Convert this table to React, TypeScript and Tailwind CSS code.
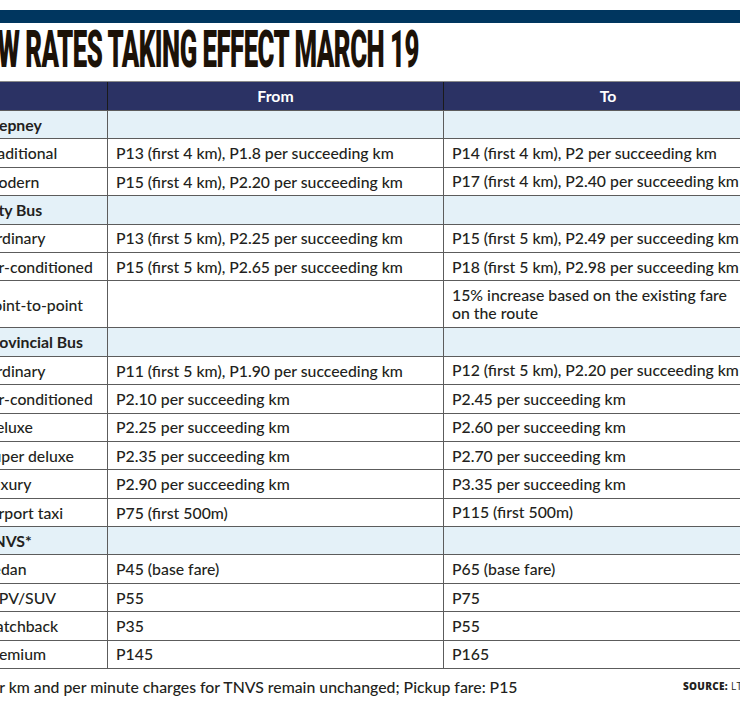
import React from "react";

type Row = {
  label: string;
  from?: string;
  to?: string;
  group?: boolean;
  tall?: boolean;
};

const rows: Row[] = [
  { label: "Jeepney", group: true },
  { label: "Traditional", from: "P13 (first 4 km), P1.8 per succeeding km", to: "P14 (first 4 km), P2 per succeeding km" },
  { label: "Modern", from: "P15 (first 4 km), P2.20 per succeeding km", to: "P17 (first 4 km), P2.40 per succeeding km" },
  { label: "City Bus", group: true },
  { label: "Ordinary", from: "P13 (first 5 km), P2.25 per succeeding km", to: "P15 (first 5 km), P2.49 per succeeding km" },
  { label: "Air-conditioned", from: "P15 (first 5 km), P2.65 per succeeding km", to: "P18 (first 5 km), P2.98 per succeeding km" },
  { label: "Point-to-point", from: "", to: "15% increase based on the existing fare on the route", tall: true },
  { label: "Provincial Bus", group: true },
  { label: "Ordinary", from: "P11 (first 5 km), P1.90 per succeeding km", to: "P12 (first 5 km), P2.20 per succeeding km" },
  { label: "Air-conditioned", from: "P2.10 per succeeding km", to: "P2.45 per succeeding km" },
  { label: "Deluxe", from: "P2.25 per succeeding km", to: "P2.60 per succeeding km" },
  { label: "Super deluxe", from: "P2.35 per succeeding km", to: "P2.70 per succeeding km" },
  { label: "Luxury", from: "P2.90 per succeeding km", to: "P3.35 per succeeding km" },
  { label: "Airport taxi", from: "P75 (first 500m)", to: "P115 (first 500m)" },
  { label: "TNVS*", group: true },
  { label: "Sedan", from: "P45 (base fare)", to: "P65 (base fare)" },
  { label: "MPV/SUV", from: "P55", to: "P75" },
  { label: "Hatchback", from: "P35", to: "P55" },
  { label: "Premium", from: "P145", to: "P165" },
];

function FareRow({ row }: { row: Row }) {
  const bg = row.group ? "bg-[#e4f1f8]" : "bg-white";
  const h = row.tall ? "h-[47px]" : "h-[28.4px]";
  return (
    <div className={`grid grid-cols-[132px_336px_336px] border-b border-[#5c5c5c] ${bg} ${h}`}>
      <div className={`flex items-center border-r border-[#5c5c5c] px-2 whitespace-nowrap ${row.group ? "font-bold" : ""}`}>
        {row.label}
      </div>
      <div className="flex items-center border-r border-[#5c5c5c] px-2 whitespace-nowrap">{row.from}</div>
      <div className="flex items-center px-2 leading-[18px] whitespace-nowrap">
        {row.tall ? (
          <span className="w-[284px] whitespace-normal">{row.to}</span>
        ) : (
          row.to
        )}
      </div>
    </div>
  );
}

export default function App() {
  return (
    <div className="h-[710px] w-[740px] overflow-hidden bg-white font-['Lato',sans-serif] text-[15.8px] font-medium text-[#231f20]">
      {/* top rule */}
      <div className="pt-[10px]">
        <div className="h-[13px] bg-[#00365f]" />
      </div>

      {/* title */}
      <div className="h-[58px] whitespace-nowrap">
        <h1 className="-ml-[34px] origin-left scale-x-[0.495] font-['Roboto',sans-serif] text-[52px] font-black leading-[54px] tracking-[-1px] text-[#1c1208]">
          NEW RATES TAKING EFFECT MARCH 19
        </h1>
      </div>

      {/* table */}
      <div className="-ml-[24px] w-[804px] border-t border-[#8a8a8a]">
        <div className="grid h-[29px] grid-cols-[132px_336px_328px] border-b border-[#5c5c5c] bg-[#2b3264] font-bold text-white">
          <div className="border-r border-[#1a1a1a]" />
          <div className="flex items-center justify-center border-r border-[#1a1a1a]">From</div>
          <div className="flex items-center justify-center">To</div>
        </div>
        {rows.map((r, i) => (
          <FareRow key={i} row={r} />
        ))}
      </div>

      {/* footer */}
      <div className="mt-[6px] flex items-center justify-between whitespace-nowrap">
        <p className="-ml-[25px]">*Per km and per minute charges for TNVS remain unchanged; Pickup fare: P15</p>
        <p className="w-[57px] font-['Open_Sans',sans-serif] text-[10px] font-extrabold tracking-[0.3px]">
          SOURCE: <span className="font-normal">LTFRB</span>
        </p>
      </div>
    </div>
  );
}
